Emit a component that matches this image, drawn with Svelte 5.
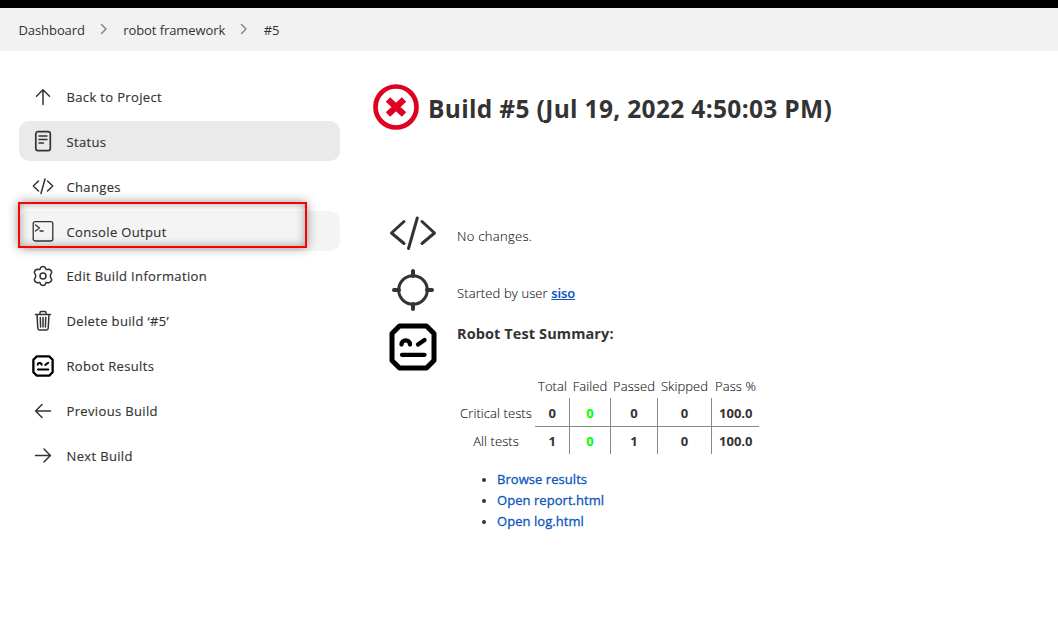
<script>
  const tasks = [
    { icon: 'up', label: 'Back to Project' },
    { icon: 'doc', label: 'Status', active: true },
    { icon: 'code', label: 'Changes' },
    { icon: 'terminal', label: 'Console Output', hover: true },
    { icon: 'gear', label: 'Edit Build Information' },
    { icon: 'trash', label: 'Delete build ‘#5’' },
    { icon: 'robot', label: 'Robot Results' },
    { icon: 'left', label: 'Previous Build' },
    { icon: 'right', label: 'Next Build' }
  ];
  const columns = ['Total', 'Failed', 'Passed', 'Skipped', 'Pass %'];
  const rows = [
    { name: 'Critical tests', values: ['0', '0', '0', '0', '100.0'] },
    { name: 'All tests', values: ['1', '0', '1', '0', '100.0'] }
  ];
  const links = ['Browse results', 'Open report.html', 'Open log.html'];
</script>

{#snippet robot()}
  <svg class="robot" viewBox="0 0 48 48" fill="none" stroke="#000" stroke-linecap="round">
    <path d="M10.500 3h27L45 10.500v27L37.500 45h-27L3 37.500v-27z" stroke-width="5" stroke-linejoin="round" />
    <path d="M12.500 21.500c0-5.500 8.500-5.500 8.500 0M29 21.500l6.500-4.500M13 31.800h22.500" stroke-width="4.300" />
  </svg>
{/snippet}

{#snippet chevron()}
  <svg class="chevron" viewBox="0 0 8 12"><path d="M1.500 1.500L6 6l-4.500 4.500" /></svg>
{/snippet}

<div class="topbar"></div>
<nav class="crumbs">
  <span>Dashboard</span>{@render chevron()}<span>robot framework</span>{@render chevron()}<span>#5</span>
</nav>

<div class="page">
  <aside>
    {#each tasks as t}
      <div class="task" class:active={t.active} class:hover={t.hover}>
        {#if t.icon === 'robot'}
          <div class="icon small-robot">{@render robot()}</div>
        {:else}
          <svg class="icon" viewBox="0 0 24 24">
            {#if t.icon === 'up'}
              <path d="M12 19.500V4.800M5.500 11.200L12 4.700l6.500 6.500" />
            {:else if t.icon === 'left'}
              <path d="M19.500 12H5M11 5.500L4.600 12l6.400 6.500" />
            {:else if t.icon === 'right'}
              <path d="M4.500 12.500H19M13 6l6.400 6.500-6.400 6.500" />
            {:else if t.icon === 'doc'}
              <rect x="4.800" y="2.700" width="14.500" height="19" rx="2.200" stroke-width="1.700" />
              <path d="M8 7h8M8 10.500h8M8 14h4.500" stroke-width="1.400" />
            {:else if t.icon === 'code'}
              <path d="M7.500 7L2.300 12l5.200 5M16.500 7l5.200 5-5.200 5M14 5l-4 14.500" />
            {:else if t.icon === 'terminal'}
              <rect x="2.200" y="2.700" width="19.600" height="19.300" rx="2" stroke-width="1.300" />
              <path d="M4.500 6l4 3-4 3M9 12h3.200" stroke-width="1.300" />
            {:else if t.icon === 'gear'}
              <circle cx="12" cy="12" r="3" />
              <path d="M9.900 3.300Q12 1.700 14.100 3.300L15.200 5.600L17.900 5.300Q20.500 6 20.700 8.500L19.400 10.900V13.100L20.700 15.500Q20.500 18 17.900 18.700L15.200 18.400L14.100 20.700Q12 22.300 9.900 20.700L8.800 18.400L6.100 18.700Q3.500 18 3.300 15.500L4.600 13.100V10.900L3.300 8.500Q3.500 6 6.100 5.300L8.800 5.600Z" />
            {:else if t.icon === 'trash'}
              <path d="M4.500 5.500h15M6 5.500l.8 13.700q.1 1.700 1.700 1.700h7q1.600 0 1.700-1.700L18 5.500M9 5.300V3.500q0-1 1-1h4q1 0 1 1v1.800M9.300 8.500l.3 9.500M12 8.500V18M14.700 8.500l-.3 9.500" />
            {/if}
          </svg>
        {/if}
        <span>{t.label}</span>
        {#if t.hover}<div class="marker"></div>{/if}
      </div>
    {/each}
  </aside>

  <main>
    <h1>
      <svg class="fail" viewBox="0 0 46 46" fill="none" stroke="#e0001f">
        <circle cx="23" cy="23" r="20.500" stroke-width="4.700" />
        <path d="M15 15.500l16 15M31 15.500l-16 15" stroke-width="6.400" />
      </svg>
      <span>Build #5 (Jul 19, 2022 4:50:03 PM)</span>
    </h1>

    <section class="info changes">
      <svg class="big" viewBox="0 0 48 48"><path d="M15 12.500L2.500 24 15 34.500M33 12.500L45.500 24 33 34.500M28.300 9L19.500 39.500" /></svg>
      <p>No changes.</p>
    </section>
    <section class="info cause">
      <svg class="big" viewBox="0 0 48 48"><circle cx="24" cy="24" r="14.300" /><path d="M24 5v5M24 38v5M5 24h5M38 24h5" stroke-width="4" /></svg>
      <p>Started by user <a href="#siso">siso</a></p>
    </section>
    <section class="info summary">
      {@render robot()}
      <div class="results">
        <h2>Robot Test Summary:</h2>
        <table>
          <colgroup><col style="width:78px" /><col style="width:34px" /><col style="width:41px" /><col style="width:47px" /><col style="width:54px" /><col style="width:48px" /></colgroup>
          <thead>
            <tr><th></th>{#each columns as c}<th>{c}</th>{/each}</tr>
          </thead>
          <tbody>
            {#each rows as r}
              <tr><th>{r.name}</th>{#each r.values as v, i}<td class:failed={i === 1}>{v}</td>{/each}</tr>
            {/each}
          </tbody>
        </table>
        <ul>
          {#each links as l}<li><a href="#result">{l}</a></li>{/each}
        </ul>
      </div>
    </section>
  </main>
</div>

<style>
  :global(body) { background: #fff; color: #333; font-family: 'Open Sans', 'Noto Sans', sans-serif; font-size: 13px; overflow: hidden; }
  * { box-sizing: border-box; }
  .topbar { height: 8px; background: #000; }
  .crumbs { height: 43px; background: #f2f2f2; display: flex; align-items: center; padding: 0 0 0 18.500px; font-size: 13px; letter-spacing: -.08px; white-space: nowrap; }
  .chevron { width: 8px; height: 12px; margin: 0 15.200px; position: relative; top: -1px; fill: none; stroke: #888; stroke-width: 1.500; stroke-linecap: round; stroke-linejoin: round; }
  .page { display: flex; height: 576px; }
  aside { width: 340px; padding: 25.600px 0 0 19px; display: flex; flex-direction: column; gap: 4.850px; flex: none; }
  .task { position: relative; height: 40px; width: 321px; border-radius: 10px; display: flex; align-items: center; padding-left: 12px; gap: 11.500px; font-weight: 500; font-size: 13px; letter-spacing: .35px; white-space: nowrap; flex: none; }
  .task span { position: relative; top: .38px; -webkit-text-stroke: .15px #333; }
  .active { background: #eaeaea; }
  .hover { background: #f4f4f4; }
  .hover span { top: .6px; }
  .icon { width: 24px; height: 24px; flex: none; fill: none; stroke: #333; stroke-width: 1.500; stroke-linecap: round; stroke-linejoin: round; }
  .small-robot { padding: 1px; }
  .small-robot .robot { width: 22px; height: 22px; display: block; }
  .marker { position: absolute; left: -1px; top: -9px; width: 289px; height: 46px; border: 2px solid #f00; box-shadow: 0 0 10px rgba(0, 0, 0, .4), inset 0 0 10px rgba(0, 0, 0, .35); }
  main { flex: 1; padding: 33px 0 0 33px; }
  h1 { margin: 0; height: 46px; display: flex; align-items: center; gap: 9px; font-size: 24.500px; font-weight: 700; letter-spacing: .33px; white-space: nowrap; }
  h1 span { position: relative; top: 1px; }
  .fail { width: 46px; height: 46px; flex: none; }
  .info { display: flex; margin-left: 16px; color: #333; }
  .info p { margin: 0; line-height: 20px; font-size: 13px; letter-spacing: .12px; }
  .info p a { letter-spacing: -.1px; }
  .changes p { letter-spacing: .3px; }
  .big { width: 48px; height: 48px; margin-right: 20px; flex: none; fill: none; stroke: #333; stroke-width: 3; stroke-linecap: round; stroke-linejoin: round; }
  .changes { margin-top: 79px; height: 57px; }
  .cause { height: 57px; }
  .changes p, .cause p { padding-top: 17px; font-weight: 300; color: #111; -webkit-text-stroke: .1px; }
  .summary > .robot { width: 48px; height: 48px; margin-right: 20px; flex: none; }
  h2 { font-size: 14.500px; line-height: 20px; margin: 0; font-weight: 700; letter-spacing: .1px; position: relative; top: 1px; }
  a { color: #0b55bd; font-weight: 600; text-decoration: none; }
  p a { text-decoration: underline; }
  table { margin-top: 29px; border-collapse: collapse; table-layout: fixed; width: 302px; font-size: 13px; }
  th, td { padding: 1px 0 0 1px; height: 28px; text-align: center; white-space: nowrap; }
  tbody th { padding: 2px 0 0; }
  tbody td { padding-top: 2px; }
  th { font-weight: 300; color: #111; letter-spacing: .08px; -webkit-text-stroke: .1px; }
  thead th { height: 26px; }
  td { font-weight: 700; border-left: 1px solid #888; }
  tbody th + td { border-left: 0; }
  tbody tr:first-child td { border-bottom: 1px solid #888; }
  .failed { color: #0f0; }
  ul { margin: 15px 0 0; padding-left: 40px; }
  li { line-height: 21px; font-size: 13px; }
  li::marker { font-size: 12px; }
  li a { font-weight: 500; letter-spacing: .05px; -webkit-text-stroke: .3px #0b55bd; }
</style>
